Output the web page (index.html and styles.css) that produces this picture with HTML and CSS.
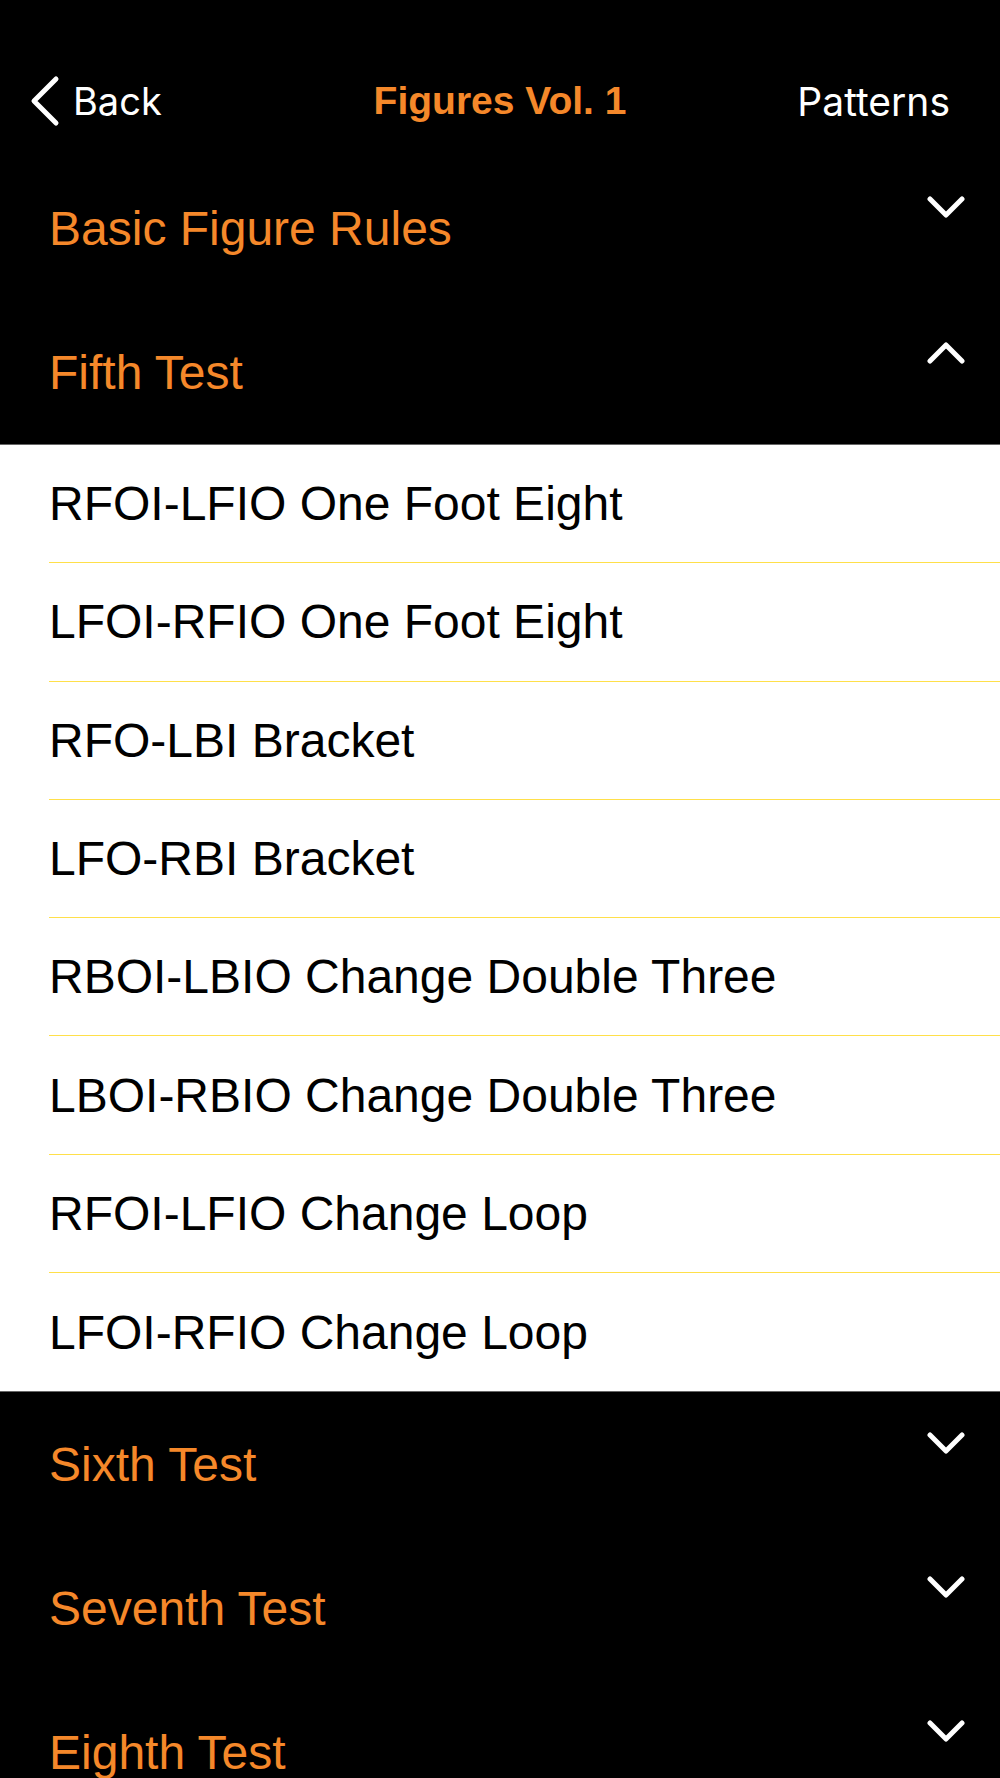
FILE: index.html
```html
<!DOCTYPE html>
<html lang="en">
<head>
    <meta charset="UTF-8">
    <meta name="viewport" content="width=device-width, initial-scale=1.0">
    <title>Figures Vol. 1</title>
    <link rel="stylesheet" href="styles.css">
</head>
<body>
    <div class="nav-bar">
        <div class="nav-back">
            <svg class="back-chevron" width="32" height="52" viewBox="0 0 32 52">
                <polyline points="27,4 5,26 27,48" fill="none" stroke="#fff" stroke-width="5" stroke-linecap="round" stroke-linejoin="round"/>
            </svg>
            <span>Back</span>
        </div>
        <div class="nav-title">Figures Vol. 1</div>
        <div class="nav-right">Patterns</div>
    </div>

    <div class="section">
        <div class="section-header">
            <span>Basic Figure Rules</span>
            <svg class="chevron" width="38" height="24" viewBox="0 0 38 24">
                <polyline points="3,3 19,19 35,3" fill="none" stroke="#fff" stroke-width="5" stroke-linecap="round" stroke-linejoin="round"/>
            </svg>
        </div>
    </div>

    <div class="section open">
        <div class="section-header">
            <span>Fifth Test</span>
            <svg class="chevron" width="38" height="24" viewBox="0 0 38 24">
                <polyline points="3,21 19,5 35,21" fill="none" stroke="#fff" stroke-width="5" stroke-linecap="round" stroke-linejoin="round"/>
            </svg>
        </div>
        <ul class="figure-list">
            <li>RFOI-LFIO One Foot Eight</li>
            <li>LFOI-RFIO One Foot Eight</li>
            <li>RFO-LBI Bracket</li>
            <li>LFO-RBI Bracket</li>
            <li>RBOI-LBIO Change Double Three</li>
            <li>LBOI-RBIO Change Double Three</li>
            <li>RFOI-LFIO Change Loop</li>
            <li>LFOI-RFIO Change Loop</li>
        </ul>
    </div>

    <div class="section">
        <div class="section-header">
            <span>Sixth Test</span>
            <svg class="chevron" width="38" height="24" viewBox="0 0 38 24">
                <polyline points="3,3 19,19 35,3" fill="none" stroke="#fff" stroke-width="5" stroke-linecap="round" stroke-linejoin="round"/>
            </svg>
        </div>
    </div>

    <div class="section">
        <div class="section-header">
            <span>Seventh Test</span>
            <svg class="chevron" width="38" height="24" viewBox="0 0 38 24">
                <polyline points="3,3 19,19 35,3" fill="none" stroke="#fff" stroke-width="5" stroke-linecap="round" stroke-linejoin="round"/>
            </svg>
        </div>
    </div>

    <div class="section">
        <div class="section-header">
            <span>Eighth Test</span>
            <svg class="chevron" width="38" height="24" viewBox="0 0 38 24">
                <polyline points="3,3 19,19 35,3" fill="none" stroke="#fff" stroke-width="5" stroke-linecap="round" stroke-linejoin="round"/>
            </svg>
        </div>
    </div>
</body>
</html>
```

FILE: styles.css
```css
body {
    margin: 0;
    background-color: #000;
    font-family: "Liberation Sans", Arial, sans-serif;
    height: 1778px;
    overflow: hidden;
}

.nav-bar {
    display: flex;
    align-items: center;
    justify-content: space-between;
    height: 110px;
    padding: 46px 50px 0 29px;
    color: #fff;
    position: relative;
}

.nav-back {
    display: flex;
    align-items: center;
    gap: 12px;
    font-family: Inter, "Noto Sans", sans-serif;
    font-size: 38px;
}

.back-chevron {
    display: block;
}

.nav-title {
    position: absolute;
    left: 0;
    right: 0;
    top: 46px;
    height: 110px;
    display: flex;
    align-items: center;
    justify-content: center;
    color: #f5882a;
    font-weight: bold;
    font-size: 39px;
    pointer-events: none;
}

.nav-right {
    font-family: Inter, "Noto Sans", sans-serif;
    font-size: 39px;
}

.section-header {
    display: flex;
    align-items: center;
    justify-content: space-between;
    height: 144px;
    padding: 0 35px 0 49px;
    color: #f5882a;
    font-size: 48px;
}

.chevron {
    display: block;
    margin-bottom: 40px;
}

.figure-list {
    list-style: none;
    margin: 0;
    padding: 0 0 0 49px;
    background-color: #fff;
    border-top: 1px solid #666;
    border-bottom: 1px solid #666;
}

.figure-list li {
    display: flex;
    align-items: center;
    box-sizing: border-box;
    height: 118.3px;
    border-bottom: 1.5px solid #ffe04a;
    color: #000;
    font-size: 48px;
}

.figure-list li:last-child {
    border-bottom: none;
}
```
